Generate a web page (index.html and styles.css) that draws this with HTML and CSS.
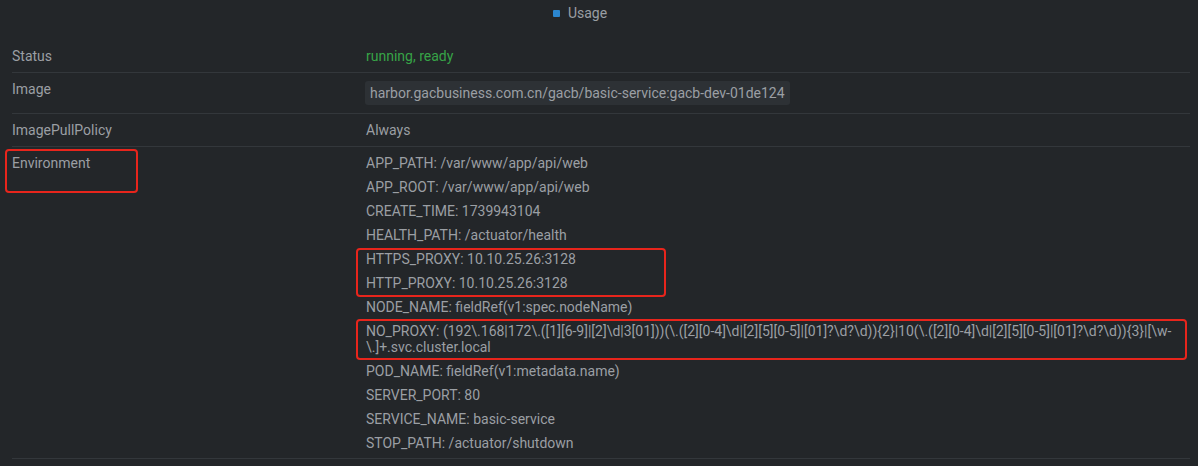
FILE: index.html
```html
<!DOCTYPE html>
<html>
<head>
<meta charset="utf-8">
<link rel="stylesheet" href="styles.css">
</head>
<body>
<div class="page">
  <div class="legend"><span class="swatch"></span><span class="legend-text">Usage</span></div>
  <div class="table">
    <div class="row">
      <div class="label">Status</div>
      <div class="value ok">running, ready</div>
    </div>
    <div class="row">
      <div class="label">Image</div>
      <div class="value"><span class="badge">harbor.gacbusiness.com.cn/gacb/basic-service:gacb-dev-01de124</span></div>
    </div>
    <div class="row">
      <div class="label">ImagePullPolicy</div>
      <div class="value">Always</div>
    </div>
    <div class="row env">
      <div class="label">Environment</div>
      <div class="value">
        <div class="item">APP_PATH: /var/www/app/api/web</div>
        <div class="item">APP_ROOT: /var/www/app/api/web</div>
        <div class="item">CREATE_TIME: 1739943104</div>
        <div class="item">HEALTH_PATH: /actuator/health</div>
        <div class="item">HTTPS_PROXY: 10.10.25.26:3128</div>
        <div class="item">HTTP_PROXY: 10.10.25.26:3128</div>
        <div class="item">NODE_NAME: fieldRef(v1:spec.nodeName)</div>
        <div class="item">NO_PROXY: (192\.168|172\.([1][6-9]|[2]\d|3[01]))(\.([2][0-4]\d|[2][5][0-5]|[01]?\d?\d)){2}|10(\.([2][0-4]\d|[2][5][0-5]|[01]?\d?\d)){3}|[\w-<wbr>\.]+.svc.cluster.local</div>
        <div class="item">POD_NAME: fieldRef(v1:metadata.name)</div>
        <div class="item">SERVER_PORT: 80</div>
        <div class="item">SERVICE_NAME: basic-service</div>
        <div class="item">STOP_PATH: /actuator/shutdown</div>
      </div>
    </div>
  </div>
  <div class="mark mark-env"></div>
  <div class="mark mark-proxy"></div>
  <div class="mark mark-noproxy"></div>
</div>
</body>
</html>
```
FILE: styles.css
```css
html, body {
  margin: 0;
  padding: 0;
  background: #232629;
}
body {
  font-family: Roboto, "Noto Sans", sans-serif;
  font-size: 14px;
  line-height: 16px;
  color: #9b9fa4;
  width: 1198px;
  height: 466px;
  overflow: hidden;
}
.page {
  position: relative;
  padding: 5px 8px 0 12px;
}
.legend {
  display: flex;
  justify-content: center;
  align-items: center;
  gap: 8px;
  padding-right: 42px;
  height: 16px;
  margin-bottom: 19px;
}
.swatch {
  width: 7px;
  height: 7px;
  background: #2b86cf;
  border-radius: 1px;
}
.legend-text {
  color: #9a9ea3;
}
.row {
  display: grid;
  grid-template-columns: 354px 1fr;
  padding: 8px 0 8px;
  border-bottom: 1px solid #33373b;
}
.env {
  padding-bottom: 7px;
}
.ok {
  color: #37a447;
}
.badge {
  display: inline-block;
  vertical-align: top;
  background: #2d3135;
  border-radius: 3px;
  padding: 4px 5px 4px 5px;
  margin-left: -1px;
}
.value {
  padding-right: 8px;
}
.item {
  margin-bottom: 8px;
}
.item:last-child {
  margin-bottom: 0;
}
.mark {
  position: absolute;
  border: 2px solid #e8251c;
  border-radius: 4px;
}
.mark-env {
  left: 5px;
  top: 149px;
  width: 129px;
  height: 40px;
}
.mark-proxy {
  left: 356px;
  top: 248px;
  width: 306px;
  height: 45px;
}
.mark-noproxy {
  left: 356px;
  top: 319px;
  width: 827px;
  height: 37px;
}
```
